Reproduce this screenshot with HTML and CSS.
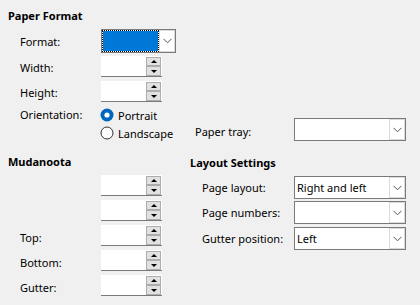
FILE: index.html
```html
<!DOCTYPE html>
<html>
<head>
<meta charset="utf-8">
<link rel="stylesheet" href="styles.css">
</head>
<body>
<div class="page">
  <div class="h">Paper Format</div>
  <div class="row r-format">
    <div class="lbl">Format:</div>
    <div class="combo focus">
      <div class="field"><div class="sel"></div></div>
      <div class="btn"><svg width="9" height="6" viewBox="0 0 9 6"><path d="M0.5 0.8 L4.5 4.8 L8.5 0.8" fill="none" stroke="#555" stroke-width="1"/></svg></div>
    </div>
  </div>
  <div class="row r-spin1">
    <div class="lbl">Width:</div>
    <div class="spin"><div class="sfield"></div><div class="sbtns"><div class="sb up"></div><div class="sb down"></div></div></div>
  </div>
  <div class="row r-spin2">
    <div class="lbl">Height:</div>
    <div class="spin"><div class="sfield"></div><div class="sbtns"><div class="sb up"></div><div class="sb down"></div></div></div>
  </div>
  <div class="row r-orient">
    <div class="lbl">Orientation:</div>
    <div class="radio">
      <svg width="14" height="14" viewBox="0 0 14 14"><circle cx="7" cy="7" r="6.5" fill="#0067c0"/><circle cx="7" cy="7" r="2.6" fill="#fff"/></svg>
      <span>Portrait</span>
    </div>
  </div>
  <div class="row r-land">
    <div class="lbl"></div>
    <div class="radio rl">
      <svg width="14" height="14" viewBox="0 0 14 14"><circle cx="7" cy="7" r="6" fill="#fff" stroke="#333" stroke-width="1"/></svg>
      <span>Landscape</span>
    </div>
    <div class="tray-lbl">Paper tray:</div>
    <div class="combo tray">
      <div class="field"></div>
      <div class="btn"><svg width="9" height="6" viewBox="0 0 9 6"><path d="M0.5 0.8 L4.5 4.8 L8.5 0.8" fill="none" stroke="#555" stroke-width="1"/></svg></div>
    </div>
  </div>

  <div class="bottom">
    <div class="col left">
      <div class="h">Mudanoota</div>
      <div class="srow first">
        <div class="lbl"></div>
        <div class="spin"><div class="sfield"></div><div class="sbtns"><div class="sb up"></div><div class="sb down"></div></div></div>
      </div>
      <div class="srow">
        <div class="lbl"></div>
        <div class="spin"><div class="sfield"></div><div class="sbtns"><div class="sb up"></div><div class="sb down"></div></div></div>
      </div>
      <div class="srow">
        <div class="lbl">Top:</div>
        <div class="spin"><div class="sfield"></div><div class="sbtns"><div class="sb up"></div><div class="sb down"></div></div></div>
      </div>
      <div class="srow">
        <div class="lbl">Bottom:</div>
        <div class="spin"><div class="sfield"></div><div class="sbtns"><div class="sb up"></div><div class="sb down"></div></div></div>
      </div>
      <div class="srow">
        <div class="lbl">Gutter:</div>
        <div class="spin"><div class="sfield"></div><div class="sbtns"><div class="sb up"></div><div class="sb down"></div></div></div>
      </div>
    </div>
    <div class="col right">
      <div class="h">Layout Settings</div>
      <div class="crow c1">
        <div class="rlbl">Page layout:</div>
        <div class="combo wide">
          <div class="field"><span>Right and left</span></div>
          <div class="btn"><svg width="9" height="6" viewBox="0 0 9 6"><path d="M0.5 0.8 L4.5 4.8 L8.5 0.8" fill="none" stroke="#555" stroke-width="1"/></svg></div>
        </div>
      </div>
      <div class="crow c2">
        <div class="rlbl">Page numbers:</div>
        <div class="combo wide">
          <div class="field"></div>
          <div class="btn"><svg width="9" height="6" viewBox="0 0 9 6"><path d="M0.5 0.8 L4.5 4.8 L8.5 0.8" fill="none" stroke="#555" stroke-width="1"/></svg></div>
        </div>
      </div>
      <div class="crow c3">
        <div class="rlbl">Gutter position:</div>
        <div class="combo wide">
          <div class="field"><span>Left</span></div>
          <div class="btn"><svg width="9" height="6" viewBox="0 0 9 6"><path d="M0.5 0.8 L4.5 4.8 L8.5 0.8" fill="none" stroke="#555" stroke-width="1"/></svg></div>
        </div>
      </div>
    </div>
  </div>
</div>
</body>
</html>
```
FILE: styles.css
```css
html, body {
  margin: 0;
  padding: 0;
}
body {
  background: #f0f0f0;
  width: 420px;
  height: 305px;
  overflow: hidden;
  font-family: "Noto Sans", "Open Sans", sans-serif;
  font-size: 11px;
  color: #000;
}
.page {
  padding: 8px 0 0 8px;
}
.h {
  font-weight: bold;
  height: 16px;
  line-height: 16px;
}
.row {
  display: flex;
  align-items: center;
  padding-left: 12px;
}
.lbl {
  width: 81px;
  flex: none;
  line-height: 16px;
}
.r-format { margin-top: 5px; height: 24px; }
.r-format .lbl { padding-top: 2px; }
.r-spin1 { margin-top: 3px; height: 21px; }
.r-spin1 .lbl, .r-spin2 .lbl { padding-top: 2px; }
.r-spin2 { margin-top: 4px; height: 21px; }
.r-orient { margin-top: 4px; height: 18px; }
.r-land { height: 18px; align-items: flex-start; }
.r-land .rl { height: 18px; }

.combo {
  display: flex;
  box-sizing: border-box;
  border: 1px solid #7a7a7a;
  background: #fff;
  flex: none;
}
.combo .field {
  flex: 1;
  display: flex;
  align-items: center;
  padding-left: 3px;
}
.combo .btn {
  width: 16px;
  flex: none;
  box-sizing: border-box;
  border: 1px solid #dadada;
  display: flex;
  align-items: center;
  justify-content: center;
  background: #fff;
}
.combo.focus {
  width: 75px;
  height: 24px;
}
.combo.focus .field {
  padding: 1px;
}
.combo.focus .sel {
  flex: 1;
  align-self: stretch;
  background: #0078d7;
  outline: 1px dotted #000;
  outline-offset: 0;
}
.combo.tray {
  width: 112px;
  height: 23px;
  align-self: flex-start;
  margin-top: -6px;
}
.tray-lbl {
  width: 99px;
  flex: none;
  line-height: 16px;
  margin-top: 0;
}
.radio {
  display: flex;
  align-items: center;
  width: 94px;
  flex: none;
}
.radio svg {
  flex: none;
  margin-right: 4px;
  margin-left: -1px;
}

.spin {
  display: flex;
  width: 61px;
  height: 21px;
  box-sizing: border-box;
  background: #fff;
  border-bottom: 1px solid #7a7a7a;
  flex: none;
}
.sfield {
  flex: 1;
}
.sbtns {
  width: 15px;
  display: flex;
  flex-direction: column;
  margin: 1px 1px 0 0;
}
.sb {
  box-sizing: border-box;
  height: 9px;
  border: 1px solid #adadad;
  background: #e1e1e1;
  position: relative;
}
.sb.down { height: 10px; }
.sb::after {
  content: "";
  position: absolute;
  left: 4px;
  width: 0;
  height: 0;
  border-left: 3px solid transparent;
  border-right: 3px solid transparent;
}
.sb.up::after {
  top: 2px;
  border-bottom: 3px solid #000;
}
.sb.down::after {
  top: 3px;
  border-top: 3px solid #000;
}

.bottom {
  display: flex;
  margin-top: 12px;
}
.col.left {
  width: 182px;
  flex: none;
}
.srow {
  display: flex;
  align-items: center;
  padding-left: 12px;
  height: 21px;
  margin-top: 4px;
}
.srow.first { margin-top: 5px; }
.srow .lbl { padding-top: 5px; }
.col.right {
  flex: 1;
}
.col.right .h { margin-top: 1px; }
.crow {
  display: flex;
  align-items: center;
  padding-left: 12px;
  height: 23px;
}
.crow.c1 { margin-top: 5px; }
.crow.c2 { margin-top: 2px; }
.crow.c3 { margin-top: 3px; }
.rlbl {
  width: 92px;
  flex: none;
}
.combo.wide {
  width: 112px;
  height: 23px;
}
.combo.wide .field {
  padding-left: 2px;
}
```
